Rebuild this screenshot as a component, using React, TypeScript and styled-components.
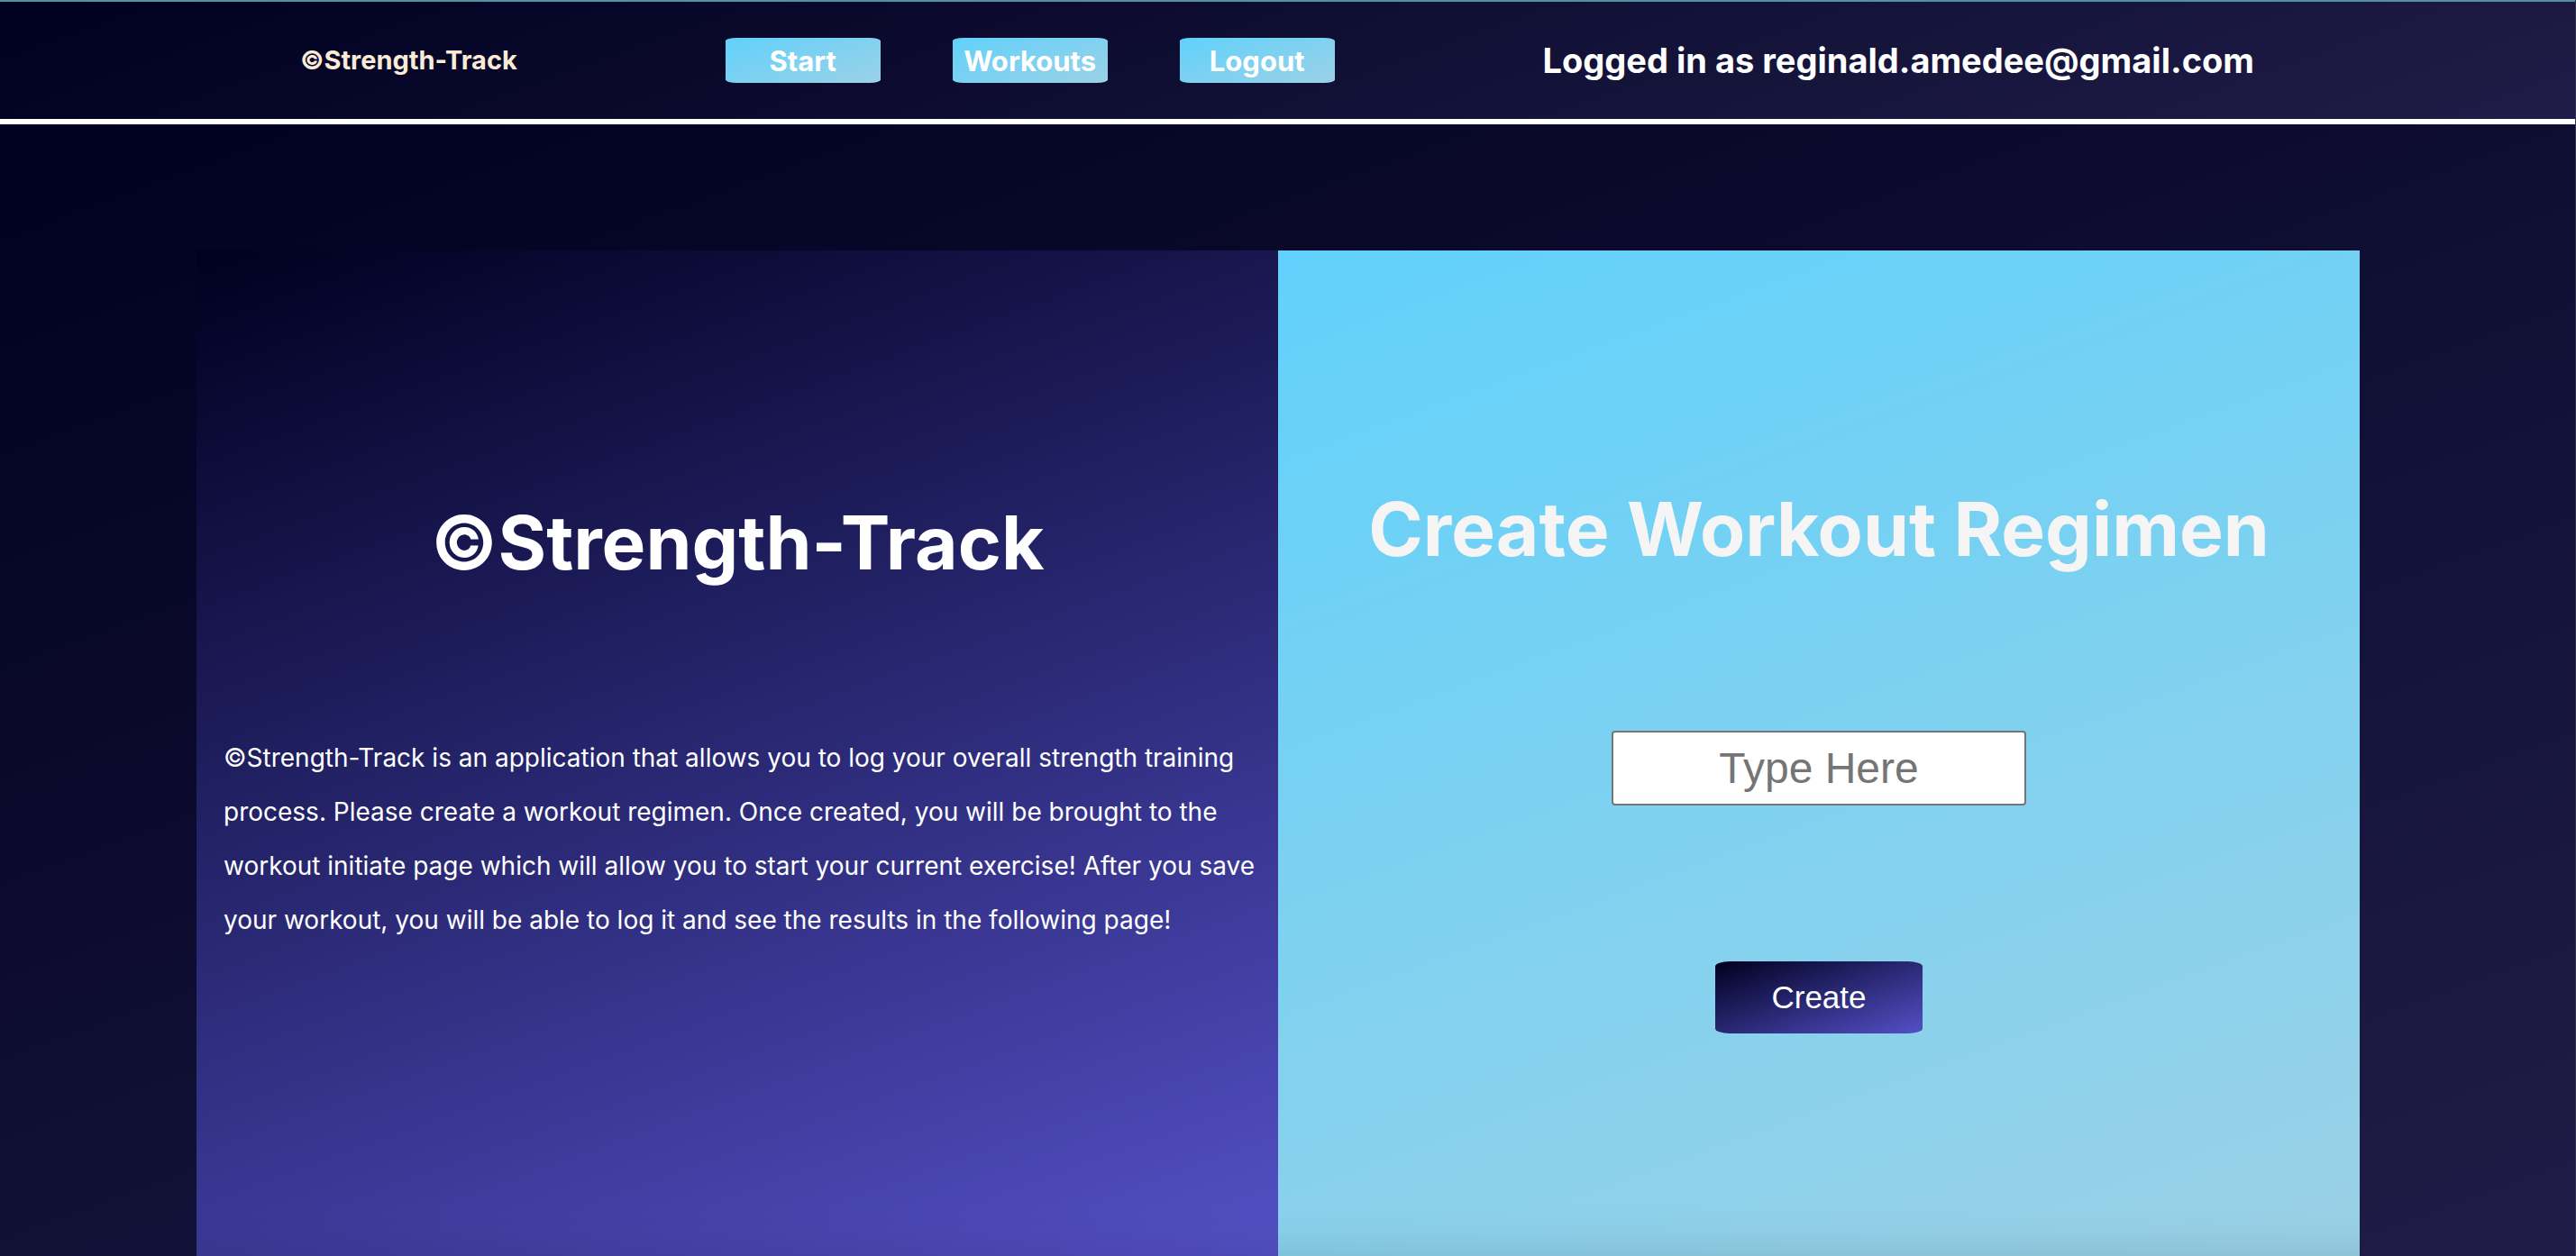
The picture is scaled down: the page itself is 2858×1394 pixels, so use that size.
import React, { useState } from 'react';
import styled, { createGlobalStyle } from 'styled-components';

const sky = 'linear-gradient(160deg, #61d1fb 0%, #9bd1e6 100%)';
const night = 'linear-gradient(160deg, #000020 0%, #1f1d47 100%)';
const indigo = 'linear-gradient(160deg, #000020 0%, #5350c6 100%)';
const footShade =
  'linear-gradient(to bottom, transparent calc(100% - 56px), rgba(0, 0, 0, 0.02) calc(100% - 28px), rgba(0, 0, 0, 0.07) 100%)';

const GlobalStyle = createGlobalStyle`
  *, *::before, *::after {
    box-sizing: border-box;
  }
  body {
    margin: 0;
    background: #000020;
    font-family: Inter, "Liberation Sans", sans-serif;
  }
`;

const Page = styled.div`
  display: flex;
  flex-direction: column;
  min-height: 100vh;
  border-right: 1px solid #33334f;
`;

const Header = styled.header`
  display: flex;
  align-items: center;
  justify-content: space-between;
  min-height: 138px;
  padding: 0 356px 0 333px;
  border-top: 2px solid #5690a0;
  border-bottom: 6px solid #ffffff;
  background: ${night} padding-box;
`;

const Brand = styled.a`
  color: #faebd7;
  font-size: 29px;
  font-weight: 700;
  line-height: 40px;
  text-decoration: none;
`;

const Nav = styled.nav`
  display: flex;
  gap: 80px;
`;

const NavButton = styled.button`
  width: 172px;
  height: 50px;
  padding: 1px 0 0;
  border: 0;
  border-radius: 7%;
  background: ${sky};
  color: #ffffff;
  font-family: inherit;
  font-size: 31px;
  font-weight: 700;
  line-height: 40px;
  cursor: pointer;
`;

const Account = styled.p`
  margin: 0;
  color: #ffffff;
  font-size: 38px;
  font-weight: 700;
  line-height: 48px;
`;

const Main = styled.main`
  display: grid;
  flex: 1;
  grid-template-columns: 1fr 1fr;
  padding: 140px 239px 0 218px;
  background: ${night};
`;

const Panel = styled.section`
  display: flex;
  flex-direction: column;
`;

const AboutPanel = styled(Panel)`
  gap: 158px;
  padding: 275px 30px 60px;
  background: ${footShade}, ${indigo};
  color: #ffffff;
`;

const CreatePanel = styled(Panel)`
  padding: 260px 30px 60px;
  background: ${footShade}, ${sky};
  color: #f5f5f5;
`;

const CreateForm = styled.form`
  display: flex;
  flex-direction: column;
  align-items: center;
  gap: 173px;
`;

const Title = styled.h1`
  margin: 0;
  font-size: 82px;
  font-weight: 700;
  line-height: 100px;
  text-align: center;
`;

const Intro = styled.p`
  margin: 0 -20px 0 0;
  font-size: 28px;
  line-height: 60px;
`;

const NameInput = styled.input`
  width: 460px;
  height: 83px;
  padding: 2px 4px;
  border: 2px solid #767676;
  border-radius: 4px;
  background: #ffffff;
  color: #000000;
  font-family: "Liberation Sans", Arial, sans-serif;
  font-size: 48px;
  text-align: center;

  &::placeholder {
    color: #757575;
  }
`;

const CreateButton = styled.button`
  width: 230px;
  height: 80px;
  padding: 0;
  border: 0;
  border-radius: 7%;
  background: ${indigo};
  color: #ffffff;
  font-family: "Liberation Sans", Arial, sans-serif;
  font-size: 35px;
  cursor: pointer;
`;

const links = ['Start', 'Workouts', 'Logout'];

export default function App() {
  const [name, setName] = useState('');

  return (
    <Page>
      <GlobalStyle />
      <Header>
        <Brand href="#">©Strength-Track</Brand>
        <Nav>
          {links.map((link) => (
            <NavButton key={link} type="button">
              {link}
            </NavButton>
          ))}
        </Nav>
        <Account>Logged in as reginald.amedee@gmail.com</Account>
      </Header>
      <Main>
        <AboutPanel>
          <Title>©Strength-Track</Title>
          <Intro>
            ©Strength-Track is an application that allows you to log your overall strength
            training process. Please create a workout regimen. Once created, you will be
            brought to the workout initiate page which will allow you to start your current
            exercise! After you save your workout, you will be able to log it and see the
            results in the following page!
          </Intro>
        </AboutPanel>
        <CreatePanel>
          <CreateForm onSubmit={(event) => event.preventDefault()}>
            <Title as="label" htmlFor="regimen">
              Create Workout Regimen
            </Title>
            <NameInput
              id="regimen"
              type="text"
              placeholder="Type Here"
              value={name}
              onChange={(event) => setName(event.target.value)}
            />
            <CreateButton type="submit">Create</CreateButton>
          </CreateForm>
        </CreatePanel>
      </Main>
    </Page>
  );
}
